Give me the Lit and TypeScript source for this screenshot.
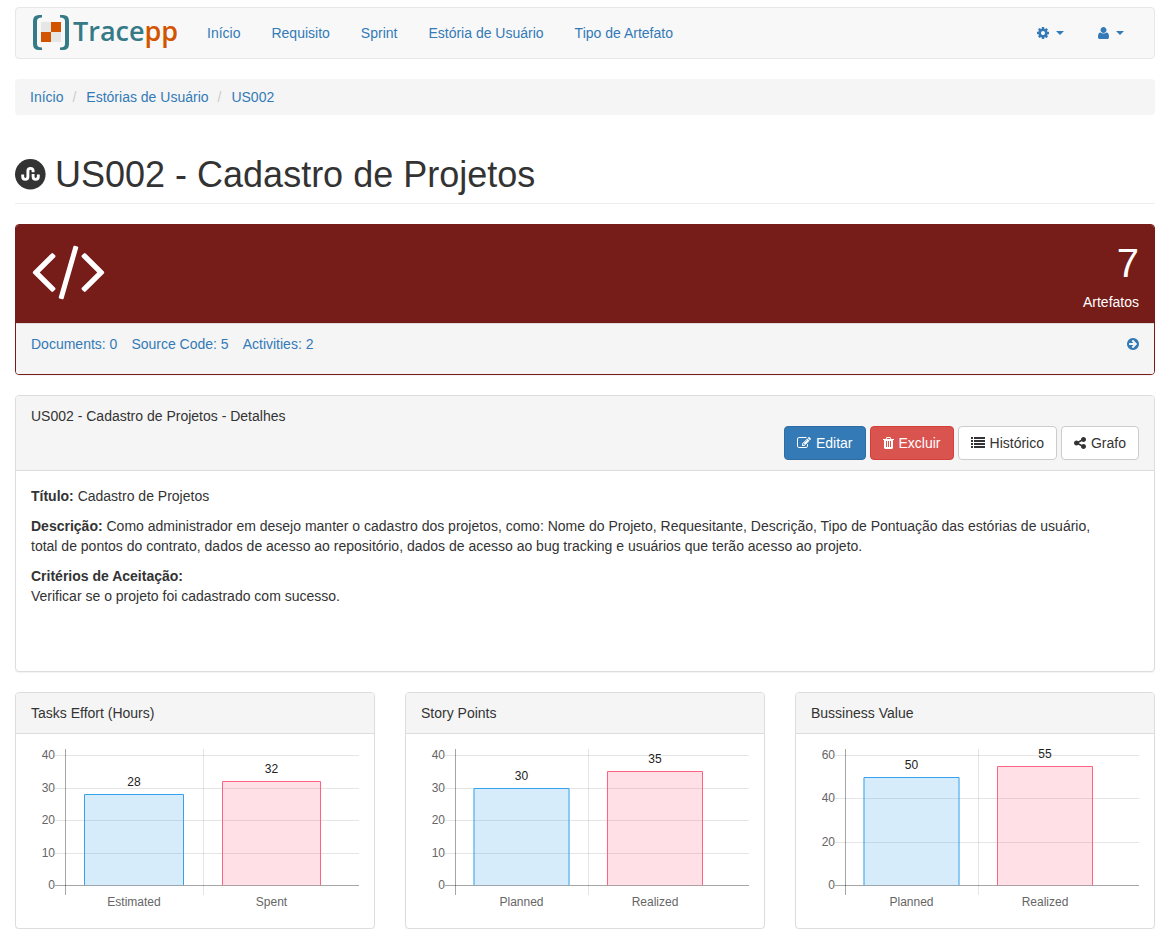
import { LitElement, html, svg, css } from "lit";
import { customElement, property } from "lit/decorators.js";

type Glyph = { box: string; w: number; h: number; d: string };

const GLYPHS: Record<string, Glyph> = {
  cog: {
    box: "128 0 1536 1792", w: 12, h: 14,
    d: "M1152 896q0-106-75-181t-181-75-181 75-75 181 75 181 181 75 181-75 75-181zm512-109v222q0 12-8 23t-20 13l-185 28q-19 54-39 91 35 50 107 138 10 12 10 25t-9 23q-27 37-99 108t-94 71q-12 0-26-9l-138-108q-44 23-91 38-16 136-29 186-7 28-36 28h-222q-14 0-24.5-8.5t-11.5-21.5l-28-184q-49-16-90-37l-141 107q-10 9-25 9-14 0-25-11-126-114-165-168-7-10-7-23 0-12 8-23 15-21 51-66.5t54-70.5q-27-50-41-99l-183-27q-13-2-21-12.5t-8-23.5v-222q0-12 8-23t19-13l186-28q14-46 39-92-40-57-107-138-10-12-10-24 0-10 9-23 26-36 98.5-107.5t94.5-71.5q13 0 26 10l138 107q44-23 91-38 16-136 29-186 7-28 36-28h222q14 0 24.5 8.5t11.5 21.5l28 184q49 16 90 37l142-107q9-9 24-9 13 0 25 10 129 119 165 170 7 8 7 22 0 12-8 23-15 21-51 66.5t-54 70.5q26 50 41 98l183 28q13 2 21 12.5t8 23.5z",
  },
  user: {
    box: "192 0 1408 1792", w: 11, h: 14,
    d: "M1600 1399q0 109-62.500 187t-150.500 78h-982q-88 0-150.500-78t-62.500-187q0-85 8.500-160.500t31.500-152 58.500-131 94-89 134.500-34.500q131 128 377 128t377-128q76 0 134.500 34.500t94 89 58.500 131 31.500 152 8.500 160.500zm-320-887q0 159-112.500 271.500t-271.500 112.500-271.500-112.500-112.500-271.500 112.500-271.500 271.500-112.500 271.500 112.500 112.500 271.500z",
  },
  code: {
    box: "64 0 1920 1792", w: 75, h: 70,
    d: "M681 1399l-50 50q-10 10-23 10t-23-10l-466-466q-10-10-10-23t10-23l466-466q10-10 23-10t23 10l50 50q10 10 10 23t-10 23l-393 393 393 393q10 10 10 23t-10 23zm591-1067l-373 1291q-4 13-15.5 19.500t-23.500 2.500l-62-17q-13-4-19.500-15.500t-2.500-24.500l373-1291q4-13 15.500-19.500t23.500-2.500l62 17q13 4 19.500 15.500t2.500 24.500zm657 651l-466 466q-10 10-23 10t-23-10l-50-50q-10-10-10-23t10-23l393-393-393-393q-10-10-10-23t10-23l50-50q10-10 23-10t23 10l466 466q10 10 10 23t-10 23z",
  },
  arrow: {
    box: "128 0 1536 1792", w: 12, h: 14,
    d: "M1413 896q0-27-18-45l-91-91-362-362q-18-18-45-18t-45 18l-91 91q-18 18-18 45t18 45l189 189h-502q-26 0-45 19t-19 45v128q0 26 19 45t45 19h502l-189 189q-19 19-19 45t19 45l91 91q18 18 45 18t45-18l362-362 91-91q18-18 18-45zm251 0q0 209-103 385.5t-279.5 279.500-385.500 103-385.500-103-279.500-279.500-103-385.500 103-385.500 279.500-279.500 385.500-103 385.500 103 279.500 279.500 103 385.500z",
  },
  edit: {
    box: "0 0 1792 1792", w: 14, h: 14,
    d: "M888 1184l116-116-152-152-116 116v56h96v96h56zm440-720q-16-16-33 1l-350 350q-17 17-1 33t33-1l350-350q17-17 1-33zm80 594v190q0 119-84.500 203.500t-203.500 84.500h-832q-119 0-203.500-84.500t-84.500-203.500v-832q0-119 84.500-203.500t203.500-84.500h832q63 0 117 25 15 7 18 23 3 17-9 29l-49 49q-14 14-32 8-23-6-45-6h-832q-66 0-113 47t-47 113v832q0 66 47 113t113 47h832q66 0 113-47t47-113v-126q0-13 9-22l64-64q15-15 35-7t20 29zm-96-738l288 288-672 672h-288v-288zm444 132l-92 92-288-288 92-92q28-28 68-28t68 28l152 152q28 28 28 68t-28 68z",
  },
  trash: {
    box: "192 0 1408 1792", w: 11, h: 14,
    d: "M704 1376v-704q0-14-9-23t-23-9h-64q-14 0-23 9t-9 23v704q0 14 9 23t23 9h64q14 0 23-9t9-23zm256 0v-704q0-14-9-23t-23-9h-64q-14 0-23 9t-9 23v704q0 14 9 23t23 9h64q14 0 23-9t9-23zm256 0v-704q0-14-9-23t-23-9h-64q-14 0-23 9t-9 23v704q0 14 9 23t23 9h64q14 0 23-9t9-23zm-544-992h448l-48-117q-7-9-17-11h-317q-10 2-17 11zm928 32v64q0 14-9 23t-23 9h-96v948q0 83-47 143.500t-113 60.500h-832q-66 0-113-59.500t-47-141.500v-952h-96q-14 0-23-9t-9-23v-64q0-14 9-23t23-9h309l70-167q15-37 54-63t79-26h320q40 0 79 26t54 63l70 167h309q14 0 23 9t9 23z",
  },
  list: {
    box: "0 0 1792 1792", w: 14, h: 14,
    d: "M0 128h256v256H0zM384 128h1408v256H384zM0 512h256v256H0zM384 512h1408v256H384zM0 896h256v256H0zM384 896h1408v256H384zM0 1280h256v256H0zM384 1280h1408v256H384z",
  },
  share: {
    box: "128 0 1536 1792", w: 12, h: 14,
    d: "M1344 1024q133 0 226.500 93.500t93.500 226.500-93.500 226.500-226.500 93.500-226.500-93.500-93.500-226.500q0-12 2-34l-360-180q-92 86-218 86-133 0-226.500-93.500t-93.500-226.500 93.500-226.500 226.500-93.500q126 0 218 86l360-180q-2-22-2-34 0-133 93.500-226.500t226.500-93.500 226.500 93.500 93.500 226.500-93.500 226.500-226.500 93.500q-126 0-218-86l-360 180q2 22 2 34t-2 34l360 180q92-86 218-86z",
  },
};

const icon = (name: string) => {
  const g = GLYPHS[name];
  return html`<svg class="icon" viewBox=${g.box} width=${g.w} height=${g.h} aria-hidden="true">
    <path d=${g.d} fill="currentColor"></path>
  </svg>`;
};

type Bar = { label: string; value: number; x: number; w: number; kind: "blue" | "pink" };

@customElement("bar-chart")
class BarChart extends LitElement {
  @property({ attribute: false }) bars: Bar[] = [];
  @property({ type: Number }) max = 40;
  @property({ type: Number }) step = 10;
  @property({ type: Number }) split = 172;

  static styles = css`
    :host { display: block; }
    svg { display: block; width: 100%; height: auto; overflow: visible; }
    text { font-family: "Liberation Sans", Arial, sans-serif; font-size: 12px; fill: #666; }
    .value { fill: #222; text-anchor: middle; }
    .cat { text-anchor: middle; }
    .tick { text-anchor: end; }
    .grid { stroke: rgba(0, 0, 0, 0.1); }
    .axis { stroke: rgba(0, 0, 0, 0.35); }
    .blue { fill: rgba(54, 162, 235, 0.2); }
    .pink { fill: rgba(255, 99, 132, 0.2); }
    .blue-edge { fill: none; stroke: rgb(54, 162, 235); }
    .pink-edge { fill: none; stroke: rgb(255, 99, 132); }
  `;

  /* Centre of the pixel row that a value falls on, for crisp one-pixel lines. */
  private row(v: number) {
    return Math.floor(136.5 - (v / this.max) * 130) + 0.5;
  }

  render() {
    const ticks: number[] = [];
    for (let t = 0; t <= this.max; t += this.step) ticks.push(t);
    return html`<svg viewBox="0 0 328 164" role="img">
      ${ticks.map((t) => {
        const y = this.row(t);
        return svg`
          <line class=${t === 0 ? "axis" : "grid"} x1="24" x2="328" y1=${y} y2=${y}></line>
          <text class="tick" x="24" y=${y + 3.5}>${t}</text>`;
      })}
      <line class="axis" x1="34.5" x2="34.5" y1="0" y2="146"></line>
      <line class="grid" x1=${this.split + 0.5} x2=${this.split + 0.5} y1="0" y2="146"></line>
      ${this.bars.map((b) => {
        const top = this.row(b.value);
        return svg`
          <rect class=${b.kind} x=${b.x} y=${top} width=${b.w} height=${136.5 - top}></rect>
          <path class="${b.kind}-edge" d="M${b.x + 0.5} 136V${top}H${b.x + b.w - 0.5}V136"></path>
          <text class="value" x=${b.x + b.w / 2} y=${top - 8.5}>${b.value}</text>
          <text class="cat" x=${b.x + b.w / 2} y="157">${b.label}</text>`;
      })}
    </svg>`;
  }
}

const CHARTS = [
  {
    title: "Tasks Effort (Hours)", max: 40, step: 10, split: 172,
    bars: [
      { label: "Estimated", value: 28, x: 53, w: 100, kind: "blue" },
      { label: "Spent", value: 32, x: 191, w: 99, kind: "pink" },
    ] as Bar[],
  },
  {
    title: "Story Points", max: 40, step: 10, split: 167,
    bars: [
      { label: "Planned", value: 30, x: 52.5, w: 96, kind: "blue" },
      { label: "Realized", value: 35, x: 186, w: 96, kind: "pink" },
    ] as Bar[],
  },
  {
    title: "Bussiness Value", max: 60, step: 20, split: 167,
    bars: [
      { label: "Planned", value: 50, x: 52.5, w: 96, kind: "blue" },
      { label: "Realized", value: 55, x: 186, w: 96, kind: "pink" },
    ] as Bar[],
  },
];

@customElement("app-root")
class AppRoot extends LitElement {
  static styles = css`
    :host {
      display: block;
      padding: 7px 16px 0 15px;
      background: #fff;
      color: #333;
      font: 14px/20px "Liberation Sans", Arial, sans-serif;
    }
    *, *::before, *::after { box-sizing: border-box; }
    a { color: #337ab7; text-decoration: none; }
    p, h1, h2, ol, ul { margin: 0; padding: 0; }
    ol, ul { list-style: none; }
    button { font: inherit; cursor: pointer; }
    svg { display: block; flex: none; }

    .navbar {
      display: flex;
      align-items: center;
      height: 52px;
      padding: 0 15px;
      background: #f8f8f8;
      border: 1px solid #e7e7e7;
      border-radius: 4px;
      margin-bottom: 20px;
    }
    .brand { display: flex; align-items: center; width: 161px; }
    .word {
      font: 600 27px/34px "Open Sans", "Noto Sans", sans-serif;
      color: #357a86;
      margin-left: 2px;
      padding-bottom: 4px;
    }
    .word-accent { color: #d35400; }
    .menu { display: flex; gap: 1px; }
    .menu a { display: block; padding: 15px; }
    .tools { display: flex; margin-left: auto; }
    .tool {
      display: flex;
      align-items: center;
      gap: 4px;
      width: 60px;
      height: 50px;
      padding: 15px;
      border: 0;
      background: none;
      color: #337ab7;
    }
    .symbol { display: flex; justify-content: center; width: 18px; }
    .caret { border: 4px solid transparent; border-top-color: currentColor; border-bottom: 0; }

    .breadcrumb {
      display: flex;
      padding: 8px 15px;
      background: #f5f5f5;
      border-radius: 4px;
    }
    .breadcrumb li + li::before { content: "/"; color: #ccc; padding: 0 10px 0 9px; }

    .title {
      display: flex;
      align-items: center;
      gap: 9px;
      margin: 40px 0 20px;
      padding-bottom: 9px;
      border-bottom: 1px solid #eee;
      font-size: 36px;
      font-weight: 400;
      line-height: 39px;
    }

    .panel {
      background: #fff;
      border: 1px solid #ddd;
      border-radius: 4px;
      box-shadow: 0 1px 1px rgba(0, 0, 0, 0.05);
      overflow: hidden;
    }
    .head {
      padding: 10px 15px;
      background: #f5f5f5;
      border-bottom: 1px solid #ddd;
      font-size: 14px;
      font-weight: 400;
      line-height: 20px;
    }
    .stat { border-color: #761c19; margin-bottom: 20px; }
    .stat-top {
      display: flex;
      justify-content: space-between;
      padding: 10px 15px 11px;
      background: #761c19;
      color: #fff;
      text-align: right;
    }
    .huge { font-size: 40px; line-height: 57px; }
    .stat-foot {
      display: flex;
      align-items: center;
      gap: 14px;
      padding: 10px 15px 20px;
      background: #f5f5f5;
      border-top: 1px solid #ddd;
    }
    .go { margin-left: auto; }

    .details { margin-bottom: 20px; }
    .actions { display: flex; justify-content: flex-end; gap: 4px; }
    .btn {
      display: flex;
      align-items: center;
      gap: 5px;
      height: 34px;
      padding: 6px 12px;
      border: 1px solid #ccc;
      border-radius: 4px;
      background: #fff;
      color: #333;
      line-height: 20px;
    }
    .primary { background: #337ab7; border-color: #2e6da4; color: #fff; }
    .danger { background: #d9534f; border-color: #d43f3a; color: #fff; }
    .body { padding: 15px; }
    .text { display: grid; gap: 10px; padding-right: 40px; padding-bottom: 65px; }

    .charts { display: grid; grid-template-columns: repeat(3, minmax(0, 1fr)); gap: 30px; }
  `;

  render() {
    return html`
      <nav class="navbar">
        <a class="brand" href="#" aria-label="Tracepp">
          <svg width="40" height="36" viewBox="0 0 40 36" aria-hidden="true">
            <path d="M11 0V2.500Q6 2.500 6 6V29Q6 32.500 11 32.500V35H8Q2 35 2 29V6Q2 0 8 0ZM29 0V2.500Q34 2.500 34 6V29Q34 32.500 29 32.500V35H32Q38 35 38 29V6Q38 0 32 0Z" fill="#357a86"></path>
            <path d="M10 7h10v10H10zM20 17h10v10H20z" fill="#e6e6e6"></path>
            <path d="M20 7h10v10H20zM10 17h10v10H10z" fill="#d35400"></path>
          </svg>
          <span class="word">Trace<span class="word-accent">pp</span></span>
        </a>
        <ul class="menu">
          ${["Início", "Requisito", "Sprint", "Estória de Usuário", "Tipo de Artefato"].map(
            (t) => html`<li><a href="#">${t}</a></li>`
          )}
        </ul>
        <div class="tools">
          <button class="tool" aria-label="Configurações">
            <span class="symbol">${icon("cog")}</span><span class="caret"></span>
          </button>
          <button class="tool" aria-label="Conta">
            <span class="symbol">${icon("user")}</span><span class="caret"></span>
          </button>
        </div>
      </nav>

      <ol class="breadcrumb">
        <li><a href="#">Início</a></li>
        <li><a href="#">Estórias de Usuário</a></li>
        <li><a href="#">US002</a></li>
      </ol>

      <h1 class="title">
        <svg width="31" height="31" viewBox="0 0 31 31" aria-hidden="true">
          <circle cx="15.300" cy="15.300" r="15.300" fill="#333"></circle>
          <path d="M7.700 15.500v2.300a2.600 2.600 0 0 0 5.200 0V12a2.600 2.600 0 0 1 5.200 0v1.300M18.100 15v2.800a2.600 2.600 0 0 0 5.200 0V15.500" fill="none" stroke="#fff" stroke-width="2.900"></path>
        </svg>
        <span>US002 - Cadastro de Projetos</span>
      </h1>

      <section class="panel stat">
        <div class="stat-top">
          ${icon("code")}
          <div>
            <div class="huge">7</div>
            <div>Artefatos</div>
          </div>
        </div>
        <div class="stat-foot">
          <a href="#">Documents: 0</a>
          <a href="#">Source Code: 5</a>
          <a href="#">Activities: 2</a>
          <a class="go" href="#" aria-label="Ver artefatos">${icon("arrow")}</a>
        </div>
      </section>

      <section class="panel details">
        <div class="head">
          <div>US002 - Cadastro de Projetos - Detalhes</div>
          <div class="actions">
            <button class="btn primary">${icon("edit")}Editar</button>
            <button class="btn danger">${icon("trash")}Excluir</button>
            <button class="btn">${icon("list")}Histórico</button>
            <button class="btn">${icon("share")}Grafo</button>
          </div>
        </div>
        <div class="body text">
          <p><strong>Título:</strong> Cadastro de Projetos</p>
          <p><strong>Descrição:</strong> Como administrador em desejo manter o cadastro dos projetos, como: Nome do Projeto, Requesitante, Descrição, Tipo de Pontuação das estórias de usuário, total de pontos do contrato, dados de acesso ao repositório, dados de acesso ao bug tracking e usuários que terão acesso ao projeto.</p>
          <p><strong>Critérios de Aceitação:</strong><br />Verificar se o projeto foi cadastrado com sucesso.</p>
        </div>
      </section>

      <div class="charts">
        ${CHARTS.map(
          (c) => html`<section class="panel">
            <h2 class="head">${c.title}</h2>
            <div class="body">
              <bar-chart .bars=${c.bars} .max=${c.max} .step=${c.step} .split=${c.split}></bar-chart>
            </div>
          </section>`
        )}
      </div>
    `;
  }
}
